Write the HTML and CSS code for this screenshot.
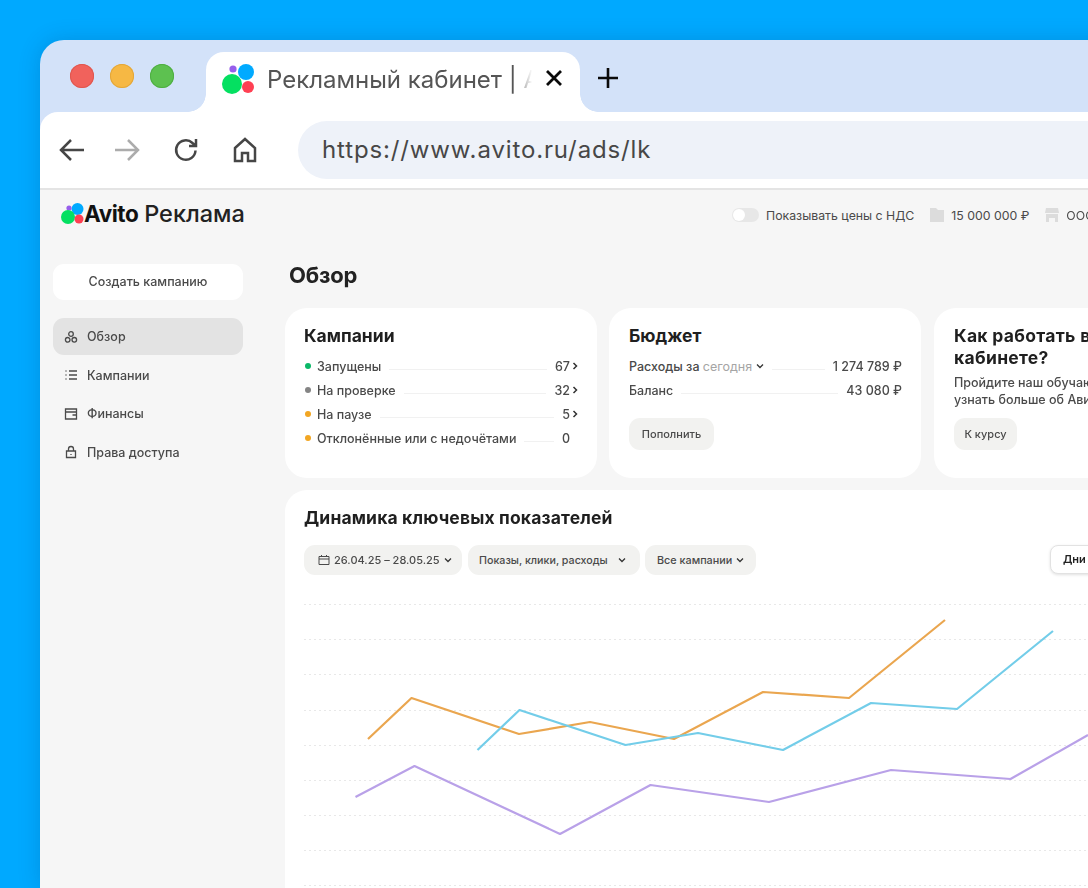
FILE: index.html
```html
<!DOCTYPE html>
<html lang="ru">
<head>
<meta charset="utf-8">
<title>Avito Реклама</title>
<link rel="stylesheet" href="styles.css">
</head>
<body>
<div class="window">
  <div class="tabstrip">
    <div class="lights"><i class="light red"></i><i class="light amber"></i><i class="light green"></i></div>
    <div class="tab">
      <svg class="favicon" viewBox="0 0 36 36"><circle cx="26" cy="10" r="8" fill="#0af"/><circle cx="13" cy="7" r="3.6" fill="#965eeb"/><circle cx="12" cy="22" r="10" fill="#04e061"/><circle cx="28" cy="25" r="6" fill="#ff4053"/></svg>
      <span class="tab-title">Рекламный кабинет | Avito</span>
      <svg class="tab-x" viewBox="0 0 18 18"><path d="M2 2l14 14M16 2L2 16"/></svg>
    </div>
    <svg class="tab-plus" viewBox="0 0 22 22"><path d="M11 1v20M1 11h20"/></svg>
  </div>
  <div class="toolbar">
    <svg class="tool" viewBox="0 0 28 28"><path d="M26 14H4M13 4L3 14l10 10"/></svg>
    <svg class="tool tool-off" viewBox="0 0 28 28"><path d="M2 14h22M15 4l10 10-10 10"/></svg>
    <svg class="tool" viewBox="0 0 28 28"><path d="M23.5 14.5a9.7 9.7 0 1 1-3-7.5L24 10M24 3v7h-7"/></svg>
    <svg class="tool" viewBox="0 0 28 28"><path d="M4 12L14 3l10 9v13h-7v-8h-6v8H4z"/></svg>
    <div class="address">https://www.avito.ru/ads/lk</div>
  </div>
  <div class="page">
    <header class="head">
      <div class="logo">
        <svg class="logo-mark" viewBox="0 0 24 22"><circle cx="16.500" cy="7" r="6" fill="#0af"/><circle cx="8" cy="6" r="2.600" fill="#965eeb"/><circle cx="7" cy="15" r="7" fill="#04e061"/><circle cx="18" cy="17" r="4.500" fill="#ff4053"/></svg>
        <span class="logo-avito">Avito</span><span class="logo-ads">Реклама</span>
      </div>
      <div class="head-tools">
        <span class="toggle"><i></i></span>
        <span class="head-label">Показывать цены с НДС</span>
        <svg class="head-ico" viewBox="0 0 16 16"><path d="M1 1h6l2 2h6v12H1z"/></svg>
        <span class="head-label">15 000 000 ₽</span>
        <svg class="head-ico" viewBox="0 0 16 16"><path d="M2 1h12l1 5H1zM2 7h12v8h-3v-4H5v4H2z"/></svg>
        <span class="head-label">ООО «Ромашка»</span>
      </div>
    </header>
    <div class="columns">
      <aside class="side">
        <button class="create">Создать кампанию</button>
        <nav class="nav">
          <a class="nav-item active"><svg viewBox="0 0 14 14"><circle cx="7" cy="4" r="2.300"/><circle cx="3.700" cy="9.800" r="2.300"/><circle cx="10.300" cy="9.800" r="2.300"/></svg>Обзор</a>
          <a class="nav-item"><svg viewBox="0 0 14 14"><path d="M1.500 3h1M1.500 7h1M1.500 11h1M5 3h8M5 7h8M5 11h8"/></svg>Кампании</a>
          <a class="nav-item"><svg viewBox="0 0 14 14"><path d="M1.500 2h11v10h-11zM1.500 5h11M8.500 8h4"/></svg>Финансы</a>
          <a class="nav-item"><svg viewBox="0 0 14 14"><path d="M2.500 6h9v6.500h-9zM4.500 6V4a2.500 2.500 0 0 1 5 0v2M7 9v1"/></svg>Права доступа</a>
        </nav>
      </aside>
      <main class="main">
        <h1 class="title">Обзор</h1>
        <div class="cards">
          <section class="card">
            <h2>Кампании</h2>
            <div class="rows">
              <div class="row"><i class="dot dot-green"></i><span>Запущены</span><b class="lead"></b><span>67</span><svg class="chev" viewBox="0 0 6 8"><path d="M1.500 1l3 3-3 3"/></svg></div>
              <div class="row"><i class="dot dot-grey"></i><span>На проверке</span><b class="lead"></b><span>32</span><svg class="chev" viewBox="0 0 6 8"><path d="M1.500 1l3 3-3 3"/></svg></div>
              <div class="row"><i class="dot dot-amber"></i><span>На паузе</span><b class="lead"></b><span>5</span><svg class="chev" viewBox="0 0 6 8"><path d="M1.500 1l3 3-3 3"/></svg></div>
              <div class="row"><i class="dot dot-amber"></i><span>Отклонённые или с недочётами</span><b class="lead"></b><span>0</span><svg class="chev" viewBox="0 0 6 8"></svg></div>
            </div>
          </section>
          <section class="card">
            <h2>Бюджет</h2>
            <div class="rows">
              <div class="row"><span>Расходы за <em>сегодня</em></span><svg class="chev-down" viewBox="0 0 8 6"><path d="M1 1.500l3 3 3-3"/></svg><b class="lead"></b><span>1 274 789 ₽</span></div>
              <div class="row"><span>Баланс</span><b class="lead"></b><span>43 080 ₽</span></div>
            </div>
            <button class="btn">Пополнить</button>
          </section>
          <section class="card card-wide">
            <h2>Как работать в рекламном<br>кабинете?</h2>
            <p>Пройдите наш обучающий курс, чтобы<br>узнать больше об Авито Рекламе</p>
            <button class="btn">К курсу</button>
          </section>
        </div>
        <section class="chart-card">
          <h2>Динамика ключевых показателей</h2>
          <div class="filters">
            <span class="chip chip-date"><svg class="cal" viewBox="0 0 12 12"><path d="M1 2.500h10v8H1zM1 5h10M3.500 1v2M8.500 1v2"/></svg>26.04.25 – 28.05.25<svg class="chev-down" viewBox="0 0 8 6"><path d="M1 1.500l3 3 3-3"/></svg></span>
            <span class="chip chip-metrics">Показы, клики, расходы<svg class="chev-down" viewBox="0 0 8 6"><path d="M1 1.500l3 3 3-3"/></svg></span>
            <span class="chip chip-all">Все кампании<svg class="chev-down" viewBox="0 0 8 6"><path d="M1 1.500l3 3 3-3"/></svg></span>
            <span class="seg">Дни</span>
          </div>
          <svg class="chart" viewBox="0 0 800 300" width="800" height="300">
            <g class="grid">
              <path d="M0 14.500H800M0 49.500H800M0 84.500H800M0 120.500H800M0 155.500H800M0 190.500H800M0 225.500H800M0 260.500H800M0 295.500H800"/>
            </g>
            <polyline class="ln ln-orange" points="64,149 107.500,108 215,144 286,132 370,149 459,102 545,108 641,30"/>
            <polyline class="ln ln-blue" points="173.500,160 215.500,120 321.500,155 394,143 479,160 567,113 653,119 749,41"/>
            <polyline class="ln ln-violet" points="51.500,207 110.500,176 256,244 346.500,195 465,212 587,180 706.500,189 784,145"/>
          </svg>
        </section>
      </main>
    </div>
  </div>
</div>
</body>
</html>
```

FILE: styles.css
```css
* { box-sizing: border-box; }
html, body { margin: 0; height: 888px; overflow: hidden; }
body {
  padding: 40px 0 0 40px;
  background: #00a9ff;
  font-family: Inter, "Noto Sans", sans-serif;
  color: #3c3c3c;
}
.window {
  width: 1300px;
  height: 848px;
  background: #d3e2f9;
  border-radius: 24px 0 0 0;
  overflow: hidden;
  box-shadow: 0 0 22px rgba(0, 50, 100, .2);
}

.tabstrip { height: 72px; padding: 12px 0 0 30px; display: flex; align-items: flex-start; }
.lights { display: flex; gap: 16px; margin-top: 12px; }
.light { display: block; width: 24px; height: 24px; border-radius: 50%; }
.red { background: #f1625c; box-shadow: inset 0 0 0 1px #df5850; }
.amber { background: #f6b844; box-shadow: inset 0 0 0 1px #e3a73a; }
.green { background: #5dc150; box-shadow: inset 0 0 0 1px #4fae43; }
.tab {
  position: relative;
  width: 374px;
  height: 60px;
  margin-left: 32px;
  padding: 10px 0 0 14px;
  background: #fff;
  border-radius: 18px 18px 0 0;
  display: flex;
  align-items: flex-start;
}
.tab::before, .tab::after {
  content: "";
  position: absolute;
  bottom: 0;
  width: 18px;
  height: 18px;
}
.tab::before { left: -18px; background: radial-gradient(circle at 0 0, transparent 17.500px, #fff 18px); }
.tab::after { right: -18px; background: radial-gradient(circle at 100% 0, transparent 17.500px, #fff 18px); }
.favicon { width: 36px; height: 36px; flex: none; }
.tab-title {
  width: 265px;
  margin: 2px 0 0 11px;
  font-size: 24px;
  line-height: 32px;
  color: #555;
  white-space: nowrap;
  overflow: hidden;
  -webkit-mask-image: linear-gradient(90deg, #000 93%, transparent 100%);
  mask-image: linear-gradient(90deg, #000 93%, transparent 100%);
}
.tab-x { width: 18px; height: 18px; margin: 7px 0 0 13px; fill: none; stroke: #0a0a0a; stroke-width: 2.800; }
.tab-plus { width: 22px; height: 22px; margin: 15px 0 0 17px; fill: none; stroke: #0a0a0a; stroke-width: 2.600; }

.toolbar {
  position: relative;
  height: 78px;
  padding: 10px 0 10px 18px;
  background: #fff;
  border-radius: 18px 0 0 0;
  border-bottom: 2px solid #e4e4e4;
  display: flex;
  align-items: center;
  gap: 31px;
}
.tool { width: 28px; height: 28px; flex: none; fill: none; stroke: #464646; stroke-width: 2.500; }
.tool-off { stroke: #acacac; margin-left: -4px; }
.address {
  width: 950px;
  height: 58px;
  margin-left: 8px;
  padding-left: 24px;
  border-radius: 29px;
  background: #eef2f9;
  font-size: 24px;
  line-height: 58px;
  letter-spacing: 0.870px;
  color: #474747;
}

.page { height: 698px; background: #f6f6f6; filter: blur(0.6px); }
.head { height: 54px; padding-left: 21px; display: flex; align-items: flex-start; }
.logo { width: 671px; height: 46px; display: flex; align-items: center; flex: none; }
.logo-mark { width: 24px; height: 22px; flex: none; }
.logo-avito { font-size: 22.500px; font-weight: 700; color: #111; margin-left: -1px; letter-spacing: -0.5px; }
.logo-ads { font-size: 23.500px; font-weight: 500; color: #222; margin-left: 6px; }
.head-tools { height: 50px; display: flex; align-items: center; font-size: 12.300px; color: #4a4a4a; white-space: nowrap; }
.toggle { width: 27px; height: 14px; border-radius: 7px; background: #e7e7e7; padding: 1px; margin-right: 7px; }
.toggle i { display: block; width: 12px; height: 12px; border-radius: 50%; background: #fff; }
.head-ico { width: 16px; height: 16px; margin: 0 6px 0 15px; fill: #dcdcdc; }

.columns { display: flex; }
.side { width: 245px; flex: none; padding: 20px 42px 0 13px; }
.create {
  display: block;
  width: 190px;
  height: 36px;
  padding: 0 0 2px;
  border: 0;
  border-radius: 11px;
  background: #fff;
  font: 500 12.500px Inter, sans-serif;
  color: #4a4a4a;
}
.nav { margin-top: 18px; display: flex; flex-direction: column; gap: 1.500px; }
.nav-item {
  height: 37px;
  padding-left: 11px;
  display: flex;
  align-items: center;
  gap: 9px;
  border-radius: 11px;
  font-size: 12.500px;
  font-weight: 500;
  color: #4a4a4a;
}
.nav-item svg { width: 14px; height: 14px; fill: none; stroke: #4a4a4a; stroke-width: 1.300; flex: none; }
.active { background: #e3e3e3; }

.main { width: 1000px; flex: none; }
.title { margin: 17px 0 19px 4px; font-size: 22px; line-height: 28px; font-weight: 700; color: #222; letter-spacing: -0.2px; }
.cards { display: flex; gap: 12px; }
.card { width: 312px; height: 170px; flex: none; padding: 17px 19px 0 19px; border-radius: 22px; background: #fff; }
.card + .card { padding-left: 20px; }
.card h2, .chart-card h2 { margin: 0; font-size: 17.500px; line-height: 22px; font-weight: 700; color: #1f1f1f; }
.card-wide { width: 400px; margin-left: 1px; }
.rows { margin-top: 7px; }
.row { height: 24px; display: flex; align-items: center; font-size: 12.500px; font-weight: 500; color: #4a4a4a; white-space: nowrap; }
.row em { font-style: normal; font-weight: 400; color: #a5a5a5; }
.lead { flex: 1; height: 1px; margin: 6px 8px 0; background: #f1f1f1; }
.dot { width: 6px; height: 6px; border-radius: 50%; margin: 0 6px 0 1px; flex: none; }
.dot-green { background: #0bb868; }
.dot-grey { background: #848484; }
.dot-amber { background: #f2a623; }
.chev { width: 6px; height: 8px; margin-left: 2px; fill: none; stroke: #333; stroke-width: 1.500; flex: none; }
.chev-down { width: 8px; height: 6px; margin-left: 4px; fill: none; stroke: #333; stroke-width: 1.300; flex: none; }
.btn {
  display: block;
  width: 85px;
  margin-top: 16px;
  height: 32px;
  padding: 0;
  border: 0;
  border-radius: 11px;
  background: #f2f2f0;
  font: 500 11px Inter, sans-serif;
  color: #4a4a4a;
}
.card p { margin: 5px 0 0; font-size: 12.500px; line-height: 17px; font-weight: 500; color: #4a4a4a; white-space: nowrap; }
.card-wide h2 { white-space: nowrap; letter-spacing: 0.300px; }
.card-wide .btn { width: 63px; margin-top: 10px; }

.chart-card { margin-top: 12px; width: 1000px; height: 420px; padding: 17px 0 0 19px; border-radius: 22px 0 0 0; background: #fff; }
.chart-card h2 { letter-spacing: 0.150px; }
.filters { margin-top: 16px; height: 30px; display: flex; align-items: stretch; font-size: 11px; color: #4a4a4a; }
.chip { display: flex; align-items: center; height: 30px; padding: 0 12px; border-radius: 11px; background: #f2f2f0; white-space: nowrap; font-weight: 500; }
.chip-date { width: 158px; padding-left: 14px; }
.chip-metrics { width: 172px; margin-left: 6px; justify-content: space-between; padding: 0 14px 0 11px; font-size: 10.700px; }
.chip-all { width: 111px; margin-left: 5px; justify-content: space-between; font-size: 10.800px; padding-right: 13px; }
.cal { width: 12px; height: 12px; margin-right: 4px; fill: none; stroke: #4a4a4a; stroke-width: 1; flex: none; }
.seg { width: 60px; height: 29px; margin-left: 294px; padding-left: 12px; border-radius: 8px; background: #fff; border: 1px solid #e2e2e2; box-shadow: 0 1px 3px rgba(0,0,0,.12); line-height: 27px; font-weight: 600; color: #222; }
.chart { display: block; margin-top: 15px; overflow: visible; }
.grid path { fill: none; stroke: #e8e8e8; stroke-width: 1; stroke-dasharray: 2 3; }
.ln { fill: none; stroke-width: 2.200; stroke-linejoin: round; }
.ln-orange { stroke: #eaa64f; }
.ln-blue { stroke: #73cde9; }
.ln-violet { stroke: #b9a1e8; }
```
